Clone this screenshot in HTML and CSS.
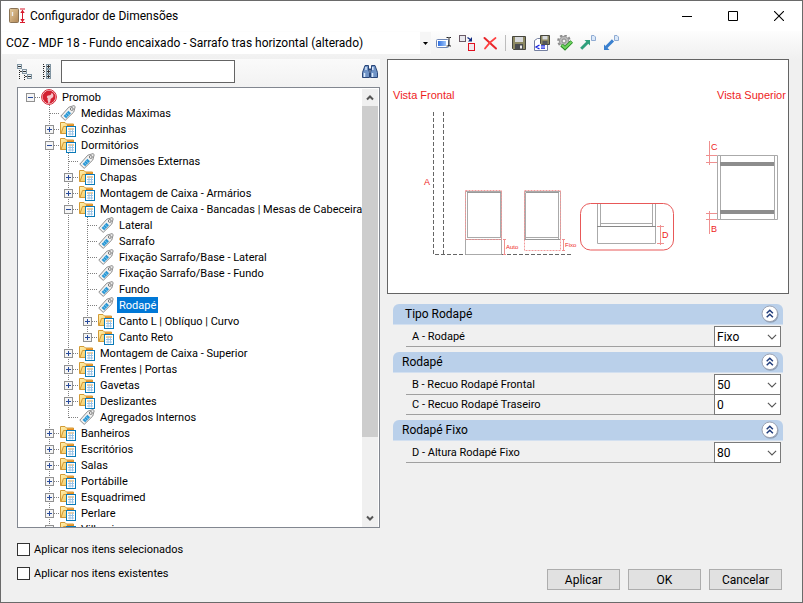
FILE: index.html
```html
<!DOCTYPE html>
<html lang="pt-BR">
<head>
<meta charset="utf-8">
<title>Configurador de Dimensões</title>
<link rel="stylesheet" href="styles.css">
</head>
<body>
<svg class="defs" aria-hidden="true">
  <defs>
    <linearGradient id="gFolder" x1="0" y1="0" x2="1" y2="1"><stop offset="0" stop-color="#fff0b0"/><stop offset="1" stop-color="#f2bf4c"/></linearGradient>
    <linearGradient id="gWood" x1="0" y1="0" x2="1" y2="1"><stop offset="0" stop-color="#e6cda0"/><stop offset="1" stop-color="#b08655"/></linearGradient>
    <linearGradient id="gBlue" x1="0" y1="0" x2="1" y2="0"><stop offset="0" stop-color="#2f6fe0"/><stop offset="1" stop-color="#9cc4fa"/></linearGradient>
  </defs>
  <symbol id="tag" viewBox="0 0 16 16">
    <path d="M.8 11.2 8.8 2.2 14 .6 15.2 1.6 13.8 7 5.2 15.4Z" fill="#f1f1f1" stroke="#8d8d8d"/>
    <path d="M3.6 11 8.4 5.8 11 8.2 6.2 13.2Z" fill="#2a97d4"/>
    <path d="M5.2 9.4 7.7 11.8M6.8 7.7 9.3 10" stroke="#8ed0f2" stroke-width=".8"/>
    <circle cx="11.8" cy="4" r="1.4" fill="#fff" stroke="#777"/>
  </symbol>
  <symbol id="folder" viewBox="0 0 16 16">
    <path d="M.5 12.5V1.5H5L6.5 3H13.5V12.5Z" fill="url(#gFolder)" stroke="#d39a35"/>
    <path d="M1 12.5 3.5 5.5H7" fill="none" stroke="#d39a35"/>
    <path d="M7 3.5H13.5V5H7Z" fill="#e58a1e"/>
    <rect x="6.5" y="5.5" width="9" height="10" fill="#fff" stroke="#0a7ab8"/>
    <path d="M8 8H14" stroke="#f0a030"/>
    <path d="M8 10.5H14M8 13H14M10 7.5V14.5M12.5 7.5V14.5" stroke="#9cc4e6"/>
  </symbol>
  <symbol id="plus" viewBox="0 0 9 9">
    <rect x=".5" y=".5" width="8" height="8" fill="#f5f5f5" stroke="#919191"/>
    <path d="M2 4.5H7M4.5 2V7" stroke="#294b9b"/>
  </symbol>
  <symbol id="minus" viewBox="0 0 9 9">
    <rect x=".5" y=".5" width="8" height="8" fill="#f5f5f5" stroke="#919191"/>
    <path d="M2 4.5H7" stroke="#294b9b"/>
  </symbol>
  <symbol id="collapse" viewBox="0 0 18 18">
    <circle cx="9.5" cy="9.8" r="8" fill="#8fa0b8"/>
    <circle cx="8.8" cy="8.8" r="7.8" fill="#fff" stroke="#9aa2b2"/>
    <path d="M5.7 8.2 8.8 5.2 11.9 8.2M5.7 12.2 8.8 9.2 11.9 12.2" fill="none" stroke="#1f3b7a" stroke-width="1.5"/>
  </symbol>
  <symbol id="chev" viewBox="0 0 10 6"><path d="M.9.9 5 5 9.1.9" fill="none" stroke="#555" stroke-width="1.1"/></symbol>
</svg>

<div class="window">
  <header class="titlebar">
    <svg class="app-icon" viewBox="0 0 16 16" aria-hidden="true">
      <rect x=".5" y=".5" width="9" height="14" rx="1" fill="url(#gWood)" stroke="#8a7355"/>
      <path d="M3.5 4V8" stroke="#eee" stroke-width="1.3"/>
      <path d="M11 1H16M11 14.5H16M13.5 2V14" stroke="#d8192c" fill="none"/>
      <path d="M11.3 5 13.5 1.8 15.7 5ZM11.3 11 13.5 14.2 15.7 11Z" fill="#d8192c"/>
    </svg>
    <h1>Configurador de Dimensões</h1>
    <div class="caption-buttons">
      <button aria-label="Minimizar"><svg viewBox="0 0 10 10"><path d="M0 5.5H10" stroke="#000"/></svg></button>
      <button aria-label="Maximizar"><svg viewBox="0 0 10 10"><path d="M.5.5H9.5V9.5H.5Z" fill="none" stroke="#000"/></svg></button>
      <button aria-label="Fechar"><svg viewBox="0 0 10 10"><path d="M0 0 10 10M10 0 0 10" stroke="#000" stroke-width="1.1"/></svg></button>
    </div>
  </header>

  <div class="toolbar">
    <div class="profile">
      <select aria-label="Configuração"><option>COZ - MDF 18 - Fundo encaixado - Sarrafo tras horizontal (alterado)</option></select>
      <svg viewBox="0 0 5 3" aria-hidden="true"><path d="M0 0H5L2.5 3Z"/></svg>
    </div>
    <div class="tools">
      <button aria-label="Renomear"><svg viewBox="0 0 16 16">
        <rect x=".5" y="4.5" width="12" height="8" rx="1" fill="#fff" stroke="#6f87b5"/><rect x="2" y="6" width="8" height="5" fill="url(#gBlue)"/>
        <path d="M10.5 2.5H12.5L13 3 13.5 2.5H15M13 3V10M10.5 11H12.5L13 10 13.5 11H15" fill="none" stroke="#222"/></svg></button>
      <button aria-label="Copiar"><svg viewBox="0 0 16 16">
        <rect x=".5" y=".5" width="6" height="6" fill="#e9e9ee" stroke="#6a5a66"/><rect x="9.5" y="8.5" width="6" height="7" fill="#f1e9ee" stroke="#e01020"/>
        <path d="M8.5 2.5 12 5" stroke="#102a80" stroke-width="1.2"/><path d="M13 2V6.5H9Z" fill="#102a80"/></svg></button>
      <button aria-label="Excluir"><svg viewBox="0 0 16 16">
        <path d="M2.5 3 14 13.5" stroke="#e8262a" stroke-width="2" stroke-linecap="round"/><path d="M13.5 3C9 6 6 9 3 13.5" fill="none" stroke="#ff4040" stroke-width="1.8" stroke-linecap="round"/></svg></button>
      <span class="separator"></span>
      <button aria-label="Salvar"><svg viewBox="0 0 16 16">
        <path d="M1.5 1.5H14.5V14.5H2.5L1.5 13.5Z" fill="#8d8962" stroke="#46463e"/><rect x="4" y="2" width="8" height="5" fill="#d8dadd"/>
        <rect x="4" y="9" width="8" height="5.5" fill="#4a4c50"/><rect x="9" y="10.5" width="2" height="3" fill="#eee"/></svg></button>
      <button aria-label="Salvar como"><svg viewBox="0 0 16 16">
        <path d="M.5 15.5V5.5L3.5 3.5H13.5V15.5Z" fill="#fff" stroke="#7580a0"/>
        <path d="M6.5.5H15.5V9.5H7.5L6.5 8.5Z" fill="#8d8962" stroke="#46463e"/><rect x="8.5" y="1" width="5" height="3.5" fill="#d8dadd"/><rect x="8.5" y="6" width="5" height="3.5" fill="#55575a"/>
        <path d="M5.5 10 2 12 5.5 14M7 10.8H11M7 13.2H11" fill="none" stroke="#1520e0" stroke-width="1.3"/></svg></button>
      <button aria-label="Validar configuração"><svg viewBox="0 0 16 16">
        <circle cx="7" cy="6" r="5.8" fill="none" stroke="#8a8a8a" stroke-width="2" stroke-dasharray="2.4 2.1"/><circle cx="7" cy="6" r="4.7" fill="#b9b9b9" stroke="#959595"/><circle cx="7" cy="6" r="2" fill="#f4f4f4" stroke="#888"/>
        <path d="M4.5 10 8 13.3 14.8 6.5" fill="none" stroke="#258a22" stroke-width="3.6"/><path d="M4.8 10 8 13 14.5 6.7" fill="none" stroke="#70d560" stroke-width="1.9"/></svg></button>
      <button aria-label="Exportar"><svg viewBox="0 0 16 16">
        <path d="M11.5.5H14L15.5 2V5.5H11.5Z" fill="#dbe9fa" stroke="#8fabd2"/>
        <path d="M1.2 13.8 7.8 7.2" stroke="#2f9f7c" stroke-width="3"/><path d="M4.5 5H10V10.5Z" fill="#2f9f7c"/></svg></button>
      <button aria-label="Importar"><svg viewBox="0 0 16 16">
        <path d="M11.5.5H14L15.5 2V5.5H11.5Z" fill="#dbe9fa" stroke="#8fabd2"/>
        <path d="M3.2 12.2 10 5.4" stroke="#3a80cf" stroke-width="3"/><path d="M1 9.5V15H6.5Z" fill="#3a80cf"/></svg></button>
    </div>
  </div>

  <main>
    <section class="left">
      <div class="search">
        <button aria-label="Recolher tudo"><svg viewBox="0 0 16 16">
          <g fill="#e8f0f5" stroke="#8195a2"><rect x=".5" y=".5" width="4" height="4"/><rect x="5.5" y="5.5" width="4" height="4"/><rect x="10.5" y="10.5" width="4" height="4"/></g>
          <path d="M1 2.5H4M6 7.5H9M11 12.5H14" stroke="#333"/><path d="M2.5 6V16M7.5 11V16" stroke="#222" stroke-dasharray="1 1"/><path d="M3 7.5H5M8 12.5H10" stroke="#444"/></svg></button>
        <button aria-label="Expandir tudo"><svg viewBox="0 0 16 16">
          <path d="M2.5 0V16" stroke="#222" stroke-dasharray="1 1"/><path d="M3 2.5H10M3 7.5H10M3 12.5H10" stroke="#444" stroke-dasharray="1 1"/>
          <g fill="#dce5ea" stroke="#8195a2"><rect x="5.5" y=".5" width="4" height="4"/><rect x="5.5" y="5.5" width="4" height="4"/><rect x="5.5" y="10.5" width="4" height="4"/></g>
          <path d="M6 2.5H9M7.5 1V4M6 7.5H9M7.5 6V9M6 12.5H9M7.5 11V14" stroke="#333"/></svg></button>
        <input type="text" aria-label="Procurar">
        <button class="find" aria-label="Localizar"><svg viewBox="0 0 16 16">
          <path d="M3 1.5H6.5V5L7.5 8.5V13.5H.5V8.5ZM9.5 1.5H13L15.5 8.5V13.5H8.5V8.5L9.5 5Z" fill="#6f93c6" stroke="#2a4678"/><path d="M6.5 5.5H9.5" stroke="#2a4678" stroke-width="2"/>
          <path d="M2.5 9V13M10.5 9V13M4 3V6M10.8 3V6" stroke="#dceafc" stroke-width="1.5"/></svg></button>
      </div>
      <div class="tree-box">
        <ul class="tree root">
          <li><div class="row"><button class="exp" aria-label="Recolher"><svg><use href="#minus"/></svg></button>
            <svg class="icon" viewBox="0 0 16 16"><circle cx="8" cy="8" r="7.4" fill="#fff" stroke="#d31f30"/><circle cx="8" cy="8" r="6.5" fill="#d31f30"/><path d="M7 14.5C8 12.5 5.5 11 7 9.5 5.5 9 5.5 6.5 7.5 6.5 9.5 6.5 10.5 5.5 10.5 3.8 13 5 13 8 11 9 9.5 9.5 9.5 10 9.5 11.5 9.3 13 8.5 14 7 14.5Z" fill="#fff" opacity=".75"/></svg><span>Promob</span></div>
            <ul class="tree">
              <li><div class="row leaf"><svg class="icon"><use href="#tag"/></svg><span>Medidas Máximas</span></div></li>
              <li><div class="row"><button class="exp" aria-label="Expandir"><svg><use href="#plus"/></svg></button><svg class="icon"><use href="#folder"/></svg><span>Cozinhas</span></div></li>
              <li><div class="row"><button class="exp" aria-label="Recolher"><svg><use href="#minus"/></svg></button><svg class="icon"><use href="#folder"/></svg><span>Dormitórios</span></div>
                <ul class="tree">
                  <li><div class="row leaf"><svg class="icon"><use href="#tag"/></svg><span>Dimensões Externas</span></div></li>
                  <li><div class="row"><button class="exp" aria-label="Expandir"><svg><use href="#plus"/></svg></button><svg class="icon"><use href="#folder"/></svg><span>Chapas</span></div></li>
                  <li><div class="row"><button class="exp" aria-label="Expandir"><svg><use href="#plus"/></svg></button><svg class="icon"><use href="#folder"/></svg><span>Montagem de Caixa - Armários</span></div></li>
                  <li><div class="row"><button class="exp" aria-label="Recolher"><svg><use href="#minus"/></svg></button><svg class="icon"><use href="#folder"/></svg><span>Montagem de Caixa - Bancadas | Mesas de Cabeceira</span></div>
                    <ul class="tree">
                      <li><div class="row leaf"><svg class="icon"><use href="#tag"/></svg><span>Lateral</span></div></li>
                      <li><div class="row leaf"><svg class="icon"><use href="#tag"/></svg><span>Sarrafo</span></div></li>
                      <li><div class="row leaf"><svg class="icon"><use href="#tag"/></svg><span>Fixação Sarrafo/Base - Lateral</span></div></li>
                      <li><div class="row leaf"><svg class="icon"><use href="#tag"/></svg><span>Fixação Sarrafo/Base - Fundo</span></div></li>
                      <li><div class="row leaf"><svg class="icon"><use href="#tag"/></svg><span>Fundo</span></div></li>
                      <li><div class="row leaf"><svg class="icon"><use href="#tag"/></svg><span class="selected">Rodapé</span></div></li>
                      <li><div class="row"><button class="exp" aria-label="Expandir"><svg><use href="#plus"/></svg></button><svg class="icon"><use href="#folder"/></svg><span>Canto L | Oblíquo | Curvo</span></div></li>
                      <li><div class="row"><button class="exp" aria-label="Expandir"><svg><use href="#plus"/></svg></button><svg class="icon"><use href="#folder"/></svg><span>Canto Reto</span></div></li>
                    </ul>
                  </li>
                  <li><div class="row"><button class="exp" aria-label="Expandir"><svg><use href="#plus"/></svg></button><svg class="icon"><use href="#folder"/></svg><span>Montagem de Caixa - Superior</span></div></li>
                  <li><div class="row"><button class="exp" aria-label="Expandir"><svg><use href="#plus"/></svg></button><svg class="icon"><use href="#folder"/></svg><span>Frentes | Portas</span></div></li>
                  <li><div class="row"><button class="exp" aria-label="Expandir"><svg><use href="#plus"/></svg></button><svg class="icon"><use href="#folder"/></svg><span>Gavetas</span></div></li>
                  <li><div class="row"><button class="exp" aria-label="Expandir"><svg><use href="#plus"/></svg></button><svg class="icon"><use href="#folder"/></svg><span>Deslizantes</span></div></li>
                  <li><div class="row leaf"><svg class="icon"><use href="#tag"/></svg><span>Agregados Internos</span></div></li>
                </ul>
              </li>
              <li><div class="row"><button class="exp" aria-label="Expandir"><svg><use href="#plus"/></svg></button><svg class="icon"><use href="#folder"/></svg><span>Banheiros</span></div></li>
              <li><div class="row"><button class="exp" aria-label="Expandir"><svg><use href="#plus"/></svg></button><svg class="icon"><use href="#folder"/></svg><span>Escritórios</span></div></li>
              <li><div class="row"><button class="exp" aria-label="Expandir"><svg><use href="#plus"/></svg></button><svg class="icon"><use href="#folder"/></svg><span>Salas</span></div></li>
              <li><div class="row"><button class="exp" aria-label="Expandir"><svg><use href="#plus"/></svg></button><svg class="icon"><use href="#folder"/></svg><span>Portábille</span></div></li>
              <li><div class="row"><button class="exp" aria-label="Expandir"><svg><use href="#plus"/></svg></button><svg class="icon"><use href="#folder"/></svg><span>Esquadrimed</span></div></li>
              <li><div class="row"><button class="exp" aria-label="Expandir"><svg><use href="#plus"/></svg></button><svg class="icon"><use href="#folder"/></svg><span>Perlare</span></div></li>
              <li><div class="row"><button class="exp" aria-label="Expandir"><svg><use href="#plus"/></svg></button><svg class="icon"><use href="#folder"/></svg><span>Villarei</span></div></li>
            </ul>
          </li>
        </ul>
        <div class="scrollbar" aria-hidden="true">
          <svg viewBox="0 0 16 17"><path d="M5 10.5 8 7.5 11 10.5" fill="none" stroke="#555" stroke-width="2"/></svg>
          <div class="track"><div class="thumb"></div></div>
          <svg viewBox="0 0 16 17"><path d="M5 6.5 8 9.5 11 6.5" fill="none" stroke="#555" stroke-width="2"/></svg>
        </div>
      </div>
    </section>

    <section class="right">
      <figure>
        <svg viewBox="388 60 400 233" role="img" aria-label="Vista frontal e vista superior do rodapé">
          <g class="red-text">
            <text x="393" y="99" font-size="11">Vista Frontal</text>
            <text x="717" y="99" font-size="11">Vista Superior</text>
            <text x="424" y="185" font-size="9">A</text>
            <text x="711" y="150" font-size="9">C</text>
            <text x="711" y="232" font-size="9">B</text>
            <text x="662" y="238" font-size="9">D</text>
            <text x="506" y="249" font-size="6">Auto</text>
            <text x="565" y="247" font-size="6">Fixo</text>
          </g>
          <g fill="none" stroke="#666" stroke-dasharray="4 2"><path d="M433.5 112V254.5H572M443.5 112V254"/></g>
          <g fill="none" stroke="#aaa">
            <path d="M465.5 191.5H501.5V254.5H465.5ZM467.5 192.5V238M500.5 192.5V238M467 237.5H501"/>
            <path d="M524.5 191.5H560.5V239.5H524.5ZM525.5 192.5V239M558.5 192.5V239M526 237.5H559"/>
            <path d="M467 192.5H501M526 192.5H559M465 239.5H502M524 239.5H561" stroke="#999"/>
            <path d="M597.5 204V243.5H655.5V204M600.5 204V226M652.5 204V226M600 223.5H653"/>
            <path d="M597 226.5H656" stroke="#888"/>
            <path d="M717.5 155.5H777.5V219.5H717.5ZM720.5 156V219M774.5 156V219"/>
          </g>
          <path d="M720 162H774V166H720ZM720 210H774V214H720Z" fill="#8d8d8d"/>
          <g fill="none" stroke="#f29a9a" stroke-dasharray="2 1"><path d="M465.5 190.5H501.5V239.5H465.5ZM524.5 190.5H560.5V250.5H524.5Z"/></g>
          <g fill="none" stroke="#ef9090"><path d="M504.5 239V254M503 239.5H506M503 254.5H506M563.5 239V250M562 239.5H565M562 250.5H565"/>
            <path d="M660.5 225V245M657 226.5H664M657 243.5H664M709.5 141V165M706 155.5H717M706 162.5H717M709.5 211V234M706 213.5H717M706 219.5H717"/></g>
          <rect x="580.5" y="203.5" width="93" height="46.5" rx="10" fill="none" stroke="#e85858"/>
        </svg>
      </figure>

      <div class="groups">
        <section class="group">
          <header><h2>&nbsp;Tipo Rodapé</h2><button aria-label="Recolher grupo"><svg><use href="#collapse"/></svg></button></header>
          <div class="field"><label for="a">A - Rodapé</label><div class="combo"><select id="a"><option>Fixo</option></select><svg><use href="#chev"/></svg></div></div>
        </section>
        <section class="group">
          <header><h2>Rodapé</h2><button aria-label="Recolher grupo"><svg><use href="#collapse"/></svg></button></header>
          <div class="field"><label for="b">B - Recuo Rodapé Frontal</label><div class="combo"><select id="b"><option>50</option></select><svg><use href="#chev"/></svg></div></div>
          <div class="field"><label for="c">C - Recuo Rodapé Traseiro</label><div class="combo"><select id="c"><option>0</option></select><svg><use href="#chev"/></svg></div></div>
        </section>
        <section class="group">
          <header><h2>Rodapé Fixo</h2><button aria-label="Recolher grupo"><svg><use href="#collapse"/></svg></button></header>
          <div class="field"><label for="d">D - Altura Rodapé Fixo</label><div class="combo"><select id="d"><option>80</option></select><svg><use href="#chev"/></svg></div></div>
        </section>
      </div>
    </section>
  </main>

  <footer>
    <div class="checks">
      <label><input type="checkbox">Aplicar nos itens selecionados</label>
      <label><input type="checkbox">Aplicar nos itens existentes</label>
    </div>
    <div class="actions">
      <button>Aplicar</button>
      <button>OK</button>
      <button>Cancelar</button>
    </div>
  </footer>
</div>
</body>
</html>
```

FILE: styles.css
```css
* { box-sizing: border-box; }

body {
  margin: 0;
  font-family: Roboto, "Liberation Sans", sans-serif;
  font-size: 11px;
  color: #000;
}

button, select, input { font: inherit; color: inherit; margin: 0; }
button { padding: 0; border: 0; background: none; }
svg { display: block; }
h1, h2, figure, ul { margin: 0; padding: 0; font-weight: normal; }
.defs { position: absolute; width: 0; height: 0; }

.window {
  display: flex;
  flex-direction: column;
  height: 100vh;
  border: 1px solid #6a6a6a;
  background: #f0f0f0;
}

.titlebar {
  display: flex;
  align-items: center;
  height: 30px;
  padding-left: 8px;
  gap: 5px;
  background: #fff;
}
.titlebar h1 { flex: 1; font-size: 12px; }
.app-icon { width: 16px; height: 16px; }
.caption-buttons { display: flex; }
.caption-buttons button {
  display: grid;
  place-items: center;
  width: 46px;
  height: 28px;
}
.caption-buttons svg { width: 10px; height: 10px; }

.toolbar {
  display: flex;
  align-items: flex-start;
  height: 28px;
  padding: 1px 0 0 1px;
  gap: 5px;
  background: linear-gradient(#fdfdfd, #f0f0f0);
}
.profile { position: relative; width: 429px; }
.profile select {
  appearance: none;
  display: block;
  width: 100%;
  height: 22px;
  padding: 0 12px 0 4px;
  border: 0;
  border-right: 11px solid #f6f6f6;
  background: #fff;
  font-size: 12px;
}
.profile svg { position: absolute; right: 3px; top: 10px; width: 5px; height: 3px; }
.tools { display: flex; align-items: center; gap: 7px; padding-top: 3px; }
.tools svg { width: 16px; height: 16px; }
.separator { width: 1px; height: 16px; margin: 0 -2px 0 0; background: #bdbdbd; }

main {
  flex: 1;
  min-height: 0;
  display: grid;
  grid-template-columns: 363fr 402fr;
  gap: 7px;
  padding: 0 13px 0 16px;
}
.left { display: flex; flex-direction: column; min-width: 0; min-height: 0; }

.search { display: flex; align-items: center; height: 28px; gap: 8px; padding: 0 2px 3px 0; background: linear-gradient(#fafafa, #f2f2f2); }
.search svg { width: 16px; height: 16px; }
.search input {
  width: 174px;
  height: 23px;
  margin-left: -4px;
  border: 1px solid #646464;
  background: #fff;
}
.find { margin-left: auto; }

.tree-box {
  flex: 1;
  min-height: 0;
  display: flex;
  padding-top: 1px;
  border: 1px solid #828790;
  background: #fff;
  overflow: hidden;
}
.tree { list-style: none; padding-left: 19px; }
.root { flex: 1; min-width: 0; padding-left: 4px; overflow: hidden; }
.tree .tree > li {
  background: repeating-linear-gradient(#808080 0 1px, transparent 1px 2px) 8px 0 / 1px 100% no-repeat;
}
.tree .tree .tree > li:last-child { background-size: 1px 9px; }
.row {
  display: flex;
  align-items: center;
  height: 16px;
  white-space: nowrap;
  background: repeating-linear-gradient(90deg, transparent 0 1px, #808080 1px 2px) 12px 8px / 8px 1px no-repeat;
}
.row.leaf { padding-left: 19px; background-position: 8px 8px; background-size: 12px 1px; }
.row .exp { width: 19px; padding: 0 6px 0 4px; }
.exp svg { width: 9px; height: 9px; }
.icon { flex: none; width: 16px; height: 16px; background: #fff; margin-right: 3px; }
.row span { padding: 2px 2px 0; line-height: 14px; }
.row .selected { background: #0078d7; color: #fff; }

.scrollbar { display: flex; flex-direction: column; width: 17px; border-right: 1px solid #fff; background: #f0f0f0; }
.scrollbar svg { width: 16px; height: 17px; }
.track { flex: 1; }
.thumb { height: 82%; background: #cdcdcd; }

figure { border: 1px solid #646464; background: #fff; }
figure svg { width: 100%; height: auto; }
.red-text { fill: #ee1c1c; font-family: "Liberation Sans", Arial, sans-serif; }

.groups { display: flex; flex-direction: column; gap: 5px; padding: 10px 6px 0; }
.group header {
  display: flex;
  align-items: center;
  justify-content: space-between;
  height: 21px;
  padding: 0 4px 0 9px;
  border-radius: 6px 6px 0 0;
  background: #bad0ea;
  border-bottom: 1px solid #d3e0f0;
}
.group h2 { font-size: 12px; }
.group header svg { width: 18px; height: 18px; }
.field {
  display: flex;
  align-items: center;
  justify-content: space-between;
  height: 20px;
  margin: 0 2px 0 13px;
  padding-left: 6px;
  border-bottom: 1px solid #a0a0a0;
}
.group header + .field { margin-top: 2px; }
.combo { position: relative; width: 67px; height: 21px; }
.combo select {
  appearance: none;
  display: block;
  width: 100%;
  height: 100%;
  padding: 0 16px 0 2px;
  border: 1px solid #7a7a7a;
  border-radius: 0;
  background: #fff;
  font-size: 12px;
}
.combo svg { position: absolute; right: 4px; top: 8px; width: 10px; height: 6px; }

footer {
  display: flex;
  justify-content: space-between;
  align-items: flex-end;
  padding: 13px 20px 12px 16px;
}
.checks { display: flex; flex-direction: column; gap: 8px; padding-bottom: 9px; }
.checks label { display: flex; align-items: center; gap: 4px; height: 16px; }
.checks input { appearance: none; width: 13px; height: 13px; border: 1px solid #333; background: #fff; }
.actions { display: flex; gap: 8px; }
.actions button {
  width: 73px;
  height: 21px;
  border: 1px solid #adadad;
  background: #e1e1e1;
  font-size: 12px;
}
```
